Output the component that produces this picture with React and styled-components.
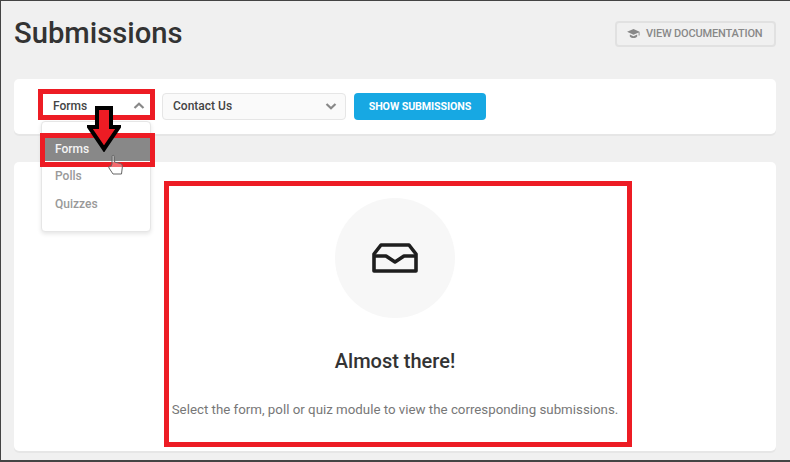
import React from "react";
import styled, { createGlobalStyle } from "styled-components";

const Global = createGlobalStyle`
  html, body { margin: 0; padding: 0; }
  body { width: 790px; height: 462px; overflow: hidden; background: #f0f0f0; font-family: Roboto, "Liberation Sans", sans-serif; }
`;

const Frame = styled.div`
  position: relative;
  box-sizing: border-box;
  width: 790px;
  height: 462px;
  overflow: hidden;
  background: #f0f0f0;
  border-top: 1px solid #444;
  border-left: 1px solid #444;
  border-bottom: 2px solid #444;
  padding: 0 14px 0 13px;
`;

const Header = styled.header`
  display: flex;
  align-items: center;
  justify-content: space-between;
  height: 78px;
  padding-bottom: 14px;
  box-sizing: border-box;
`;

const Title = styled.h1`
  margin: 0;
  font-size: 29.2px;
  line-height: 36px;
  font-weight: 500;
  color: #333;
`;

const DocButton = styled.button`
  display: flex;
  align-items: center;
  gap: 6px;
  box-sizing: border-box;
  width: 161px;
  height: 26px;
  margin-top: 1px;
  padding: 0 0 0 10px;
  border: 2px solid #e1e1e1;
  border-radius: 4px;
  background: transparent;
  color: #888;
  font: 500 11px Roboto, sans-serif;
  letter-spacing: -0.17px;
  white-space: nowrap;
`;

const Card = styled.section`
  background: #fff;
  border-radius: 5px;
  box-shadow: 0 2px 0 #e6e6e6;
`;

const Toolbar = styled(Card)`
  display: flex;
  align-items: center;
  gap: 8px;
  height: 55px;
  padding: 0 0 1px 25px;
  box-sizing: border-box;
`;

const Select = styled.div`
  display: flex;
  align-items: center;
  justify-content: space-between;
  box-sizing: border-box;
  width: ${(p) => p.$width}px;
  height: 27px;
  padding: 0 7px 0 ${(p) => p.$pad}px;
  border: 1px solid ${(p) => (p.$open ? "transparent" : "#e6e6e6")};
  border-radius: 4px;
  background: ${(p) => (p.$open ? "#fff" : "#fafafa")};
  color: #444;
  font-size: 12px;
  font-weight: 500;
`;

const SubmitButton = styled.button`
  height: 27px;
  width: 132px;
  border: 0;
  border-radius: 4px;
  background: #17a8e3;
  color: #fff;
  font: 700 10.7px Roboto, sans-serif;
  letter-spacing: -0.1px;
`;

const Menu = styled.ul`
  position: absolute;
  left: 40px;
  top: 120px;
  box-sizing: border-box;
  width: 110px;
  height: 111px;
  margin: 0;
  padding: 15px 0 0 3px;
  list-style: none;
  background: #fff;
  border: 1px solid #e6e6e6;
  border-radius: 4px;
  box-shadow: 0 2px 4px rgba(0, 0, 0, 0.1);
  z-index: 2;
`;

const MenuItem = styled.li`
  height: ${(p) => (p.$active ? 24 : 28)}px;
  line-height: ${(p) => (p.$active ? 24 : 28)}px;
  margin-bottom: ${(p) => (p.$active ? 1 : 0)}px;
  padding-left: 10px;
  font-size: 12px;
  font-weight: 500;
  color: ${(p) => (p.$active ? "#f4f4f4" : "#999")};
  background: ${(p) => (p.$active ? "#888" : "transparent")};
`;

const Panel = styled(Card)`
  display: flex;
  flex-direction: column;
  align-items: center;
  box-sizing: border-box;
  width: 762px;
  height: 289px;
  margin-top: 28px;
  padding: 36px 0 0 0;
`;

const Circle = styled.div`
  display: flex;
  align-items: center;
  justify-content: center;
  width: 120px;
  height: 120px;
  border-radius: 50%;
  background: #f7f7f7;
`;

const Heading = styled.h2`
  margin: 30px 0 0;
  font-size: 20px;
  line-height: 26px;
  font-weight: 500;
  color: #333;
`;

const Note = styled.p`
  margin: 27px 0 0;
  font-size: 13.3px;
  line-height: 18px;
  color: #777;
  white-space: nowrap;
`;

const Mark = styled.div`
  position: absolute;
  box-sizing: border-box;
  left: ${(p) => p.$x}px;
  top: ${(p) => p.$y}px;
  width: ${(p) => p.$w}px;
  height: ${(p) => p.$h}px;
  border: 5px solid #ed1c24;
  pointer-events: none;
  z-index: 3;
`;

const Overlay = styled.svg`
  position: absolute;
  left: ${(p) => p.$x}px;
  top: ${(p) => p.$y}px;
  z-index: 4;
`;

const Chevron = ({ up, color }) => (
  <svg width="14" height="14" viewBox="0 0 14 14" fill="none" stroke={color} strokeWidth="2.2">
    <path d={up ? "M2.500 9 7 4.700 11.500 9" : "M2.500 5 7 9.300 11.500 5"} />
  </svg>
);

const Cap = () => (
  <svg width="13" height="11" viewBox="0 0 14 12" fill="#888">
    <path d="M7 1 0 4.200 7 7.400l5.600-2.600v3.400h1V4.200z" />
    <path d="M3 7v2.200C4 10.400 5.500 11 7 11s3-.6 4-1.800V7L7 8.900z" />
  </svg>
);

const Inbox = () => (
  <svg width="46" height="30" viewBox="0 0 46 30" fill="none" stroke="#1e1e1e" strokeWidth="3.600" strokeLinejoin="round">
    <path d="M2 11 9 2h28l7 9v17H2z" />
    <path d="M2 13h12l9 6 9-6h12" />
  </svg>
);

export default function App() {
  return (
    <Frame>
      <Global />
      <Header>
        <Title>Submissions</Title>
        <DocButton><Cap />VIEW DOCUMENTATION</DocButton>
      </Header>
      <Toolbar>
        <Select $open $width={115} $pad={13}>Forms<Chevron up color="#888" /></Select>
        <Select $width={184} $pad={10}>Contact Us<Chevron color="#888" /></Select>
        <SubmitButton>SHOW SUBMISSIONS</SubmitButton>
      </Toolbar>
      <Menu>
        <MenuItem $active>Forms</MenuItem>
        <MenuItem>Polls</MenuItem>
        <MenuItem>Quizzes</MenuItem>
      </Menu>
      <Panel>
        <Circle><Inbox /></Circle>
        <Heading>Almost there!</Heading>
        <Note>Select the form, poll or quiz module to view the corresponding submissions.</Note>
      </Panel>
      <Mark $x={37} $y={88} $w={117} $h={31} />
      <Mark $x={39} $y={132} $w={115} $h={34} />
      <Mark $x={163} $y={180} $w={468} $h={266} />
      <Overlay $x={86} $y={105} width="34" height="46" viewBox="0 0 34 46">
        <path d="M10 2h14v19h8L17 43 2 21h8z" fill="#ed1c24" stroke="#000" strokeWidth="4" />
      </Overlay>
      <Overlay $x={107} $y={153} width="16" height="22" viewBox="0 0 16 22">
        <path d="M4 10V2.500a1.200 1.200 0 0 1 2.400 0V8l6 1.500c1.500.5 2 1.500 2 3L13.500 20H5l-4-6c-.8-1.400 1-2.800 2-1.500z" fill="#fff" fillOpacity="0.35" stroke="#666" strokeWidth="1" />
      </Overlay>
    </Frame>
  );
}
